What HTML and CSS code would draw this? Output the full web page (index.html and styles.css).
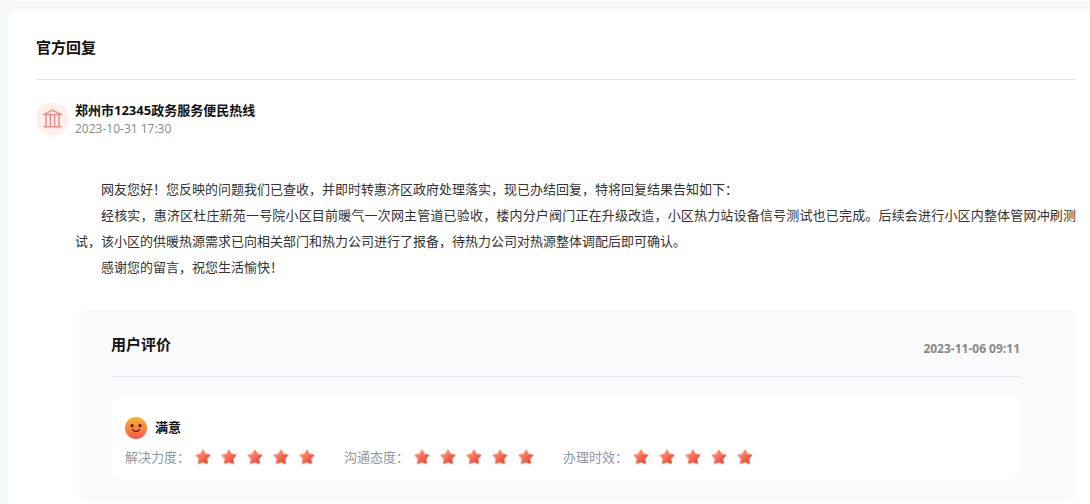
FILE: index.html
```html
<!DOCTYPE html>
<html lang="zh-CN">
<head>
    <meta charset="UTF-8">
    <title>官方回复</title>
    <link rel="stylesheet" href="styles.css">
</head>
<body>
<svg class="defs" width="0" height="0" aria-hidden="true">
    <defs>
        <linearGradient id="starFill" x1="0" y1="0" x2="1" y2="1">
            <stop offset="0.1" stop-color="#ff9a78"/>
            <stop offset="0.9" stop-color="#ea3f30"/>
        </linearGradient>
        <symbol id="star" viewBox="0 0 18 18">
            <path d="M9 2.4l2.3 4 4.4.9-3 3.4.5 4.5L9 13.7l-4.2 1.5.5-4.5-3-3.4 4.4-.9z" fill="none" stroke="#fbd3c8" stroke-width="2.6" stroke-linejoin="round"/>
            <path d="M9 2.4l2.3 4 4.4.9-3 3.4.5 4.5L9 13.7l-4.2 1.5.5-4.5-3-3.4 4.4-.9z" fill="url(#starFill)" stroke="url(#starFill)" stroke-width="1" stroke-linejoin="round"/>
        </symbol>
    </defs>
</svg>
<div class="prev"></div>
<section class="reply">
    <h2 class="title">官方回复</h2>
    <div class="author">
        <svg class="avatar" viewBox="0 0 34 34" aria-hidden="true">
            <circle cx="16.5" cy="17" r="16.5" fill="#feefee"/>
            <g fill="none" stroke="#e98780" stroke-width="1.4" stroke-linejoin="round">
                <path d="M7.5 12.6l9-4.4 9 4.4z"/>
                <path d="M10 13v11.5M14.4 13v11.5M18.6 13v11.5M23 13v11.5"/>
                <path d="M7.5 24.8h18"/>
            </g>
        </svg>
        <div class="info">
            <h3 class="name">郑州市12345政务服务便民热线</h3>
            <time class="time">2023-10-31 17:30</time>
        </div>
    </div>
    <div class="content">
        <p>网友您好！您反映的问题我们已查收，并即时转惠济区政府处理落实，现已办结回复，特将回复结果告知如下：</p>
        <p>经核实，惠济区杜庄新苑一号院小区目前暖气一次网主管道已验收，楼内分户阀门正在升级改造，小区热力站设备信号测试也已完成。后续会进行小区内整体管网冲刷测试，该小区的供暖热源需求已向相关部门和热力公司进行了报备，待热力公司对热源整体调配后即可确认。</p>
        <p>感谢您的留言，祝您生活愉快！</p>
    </div>
    <div class="review">
        <div class="review-head">
            <h2>用户评价</h2>
            <time>2023-11-06 09:11</time>
        </div>
        <div class="card">
            <div class="mood">
                <svg viewBox="0 0 22 22" aria-hidden="true">
                    <defs>
                        <linearGradient id="faceFill" x1="0" y1="0" x2="0" y2="1">
                            <stop offset="0" stop-color="#fbb52c"/>
                            <stop offset="1" stop-color="#ff5450"/>
                        </linearGradient>
                    </defs>
                    <circle cx="11" cy="11" r="11" fill="url(#faceFill)"/>
                    <circle cx="7" cy="8.5" r="1.5" fill="#30201c"/>
                    <circle cx="15" cy="8.5" r="1.5" fill="#30201c"/>
                    <path d="M7.6 12.6c1.7 2.4 5.1 2.4 6.8 0" fill="none" stroke="#30201c" stroke-width="1.4" stroke-linecap="round"/>
                </svg>
                <strong>满意</strong>
            </div>
            <ul class="scores">
                <li>
                    <span>解决力度：</span>
                    <div class="stars" role="img" aria-label="5星">
                        <svg><use href="#star"/></svg><svg><use href="#star"/></svg><svg><use href="#star"/></svg><svg><use href="#star"/></svg><svg><use href="#star"/></svg>
                    </div>
                </li>
                <li>
                    <span>沟通态度：</span>
                    <div class="stars" role="img" aria-label="5星">
                        <svg><use href="#star"/></svg><svg><use href="#star"/></svg><svg><use href="#star"/></svg><svg><use href="#star"/></svg><svg><use href="#star"/></svg>
                    </div>
                </li>
                <li>
                    <span>办理时效：</span>
                    <div class="stars" role="img" aria-label="5星">
                        <svg><use href="#star"/></svg><svg><use href="#star"/></svg><svg><use href="#star"/></svg><svg><use href="#star"/></svg><svg><use href="#star"/></svg>
                    </div>
                </li>
            </ul>
        </div>
    </div>
</section>
</body>
</html>
```
FILE: styles.css
```css
*{
    box-sizing: border-box;
    margin: 0;
    padding: 0;
}
body{
    display: flex;
    flex-direction: column;
    min-height: 100vh;
    padding-left: 8px;
    background-color: #f7f8fa;
    color: #333;
    font-family: "Open Sans", "Noto Sans CJK SC", sans-serif;
    font-size: 13px;
}
.defs{
    position: absolute;
}
/*上一个卡片的底边*/
.prev{
    height: 1px;
    margin-left: 4px;
    background-color: #fff;
}
.reply{
    flex: 1;
    margin-top: 10px;
    padding: 0 14px 2px 28px;
    border-radius: 8px 0 0 0;
    background-color: #fff;
}
h2{
    color: #111;
    font-size: 15px;
    line-height: 24px;
}
.title{
    padding: 24px 0 20px;
    border-bottom: 1px solid #e4e4e6;
}
.author{
    display: flex;
    align-items: center;
    gap: 5px;
    margin-top: 20px;
}
.avatar{
    width: 34px;
    height: 34px;
}
.name{
    color: #111;
    font-size: 13px;
    line-height: 20px;
}
.time{
    display: block;
    color: #888;
    font-size: 12px;
    line-height: 18px;
}
.content{
    margin: 38px 0 30px 39px;
    line-height: 26px;
    text-align: justify;
}
.content p{
    text-indent: 2em;
}
.review{
    margin-left: 43px;
    padding: 22px 56px 22px 32px;
    border-radius: 8px;
    background-color: #f9fafc;
}
.review-head{
    display: flex;
    justify-content: space-between;
    align-items: flex-end;
    padding-bottom: 20px;
    border-bottom: 1px solid #e4e5e8;
}
.review-head time{
    color: #888;
    font-size: 12px;
    font-weight: bold;
    line-height: 14px;
}
.card{
    margin-top: 19px;
    padding: 21px 14px 13px;
    border-radius: 10px;
    background-color: #fff;
}
.mood{
    display: flex;
    gap: 8px;
    color: #111;
    line-height: 20px;
}
.mood svg{
    width: 22px;
    height: 22px;
}
.scores{
    display: flex;
    flex-wrap: wrap;
    gap: 0 24px;
    margin-top: 8px;
    list-style: none;
    color: #8d97a6;
    line-height: 20px;
}
.scores li{
    display: flex;
    align-items: center;
}
.stars{
    display: flex;
}
.stars svg{
    width: 26px;
    height: 18px;
}
```
